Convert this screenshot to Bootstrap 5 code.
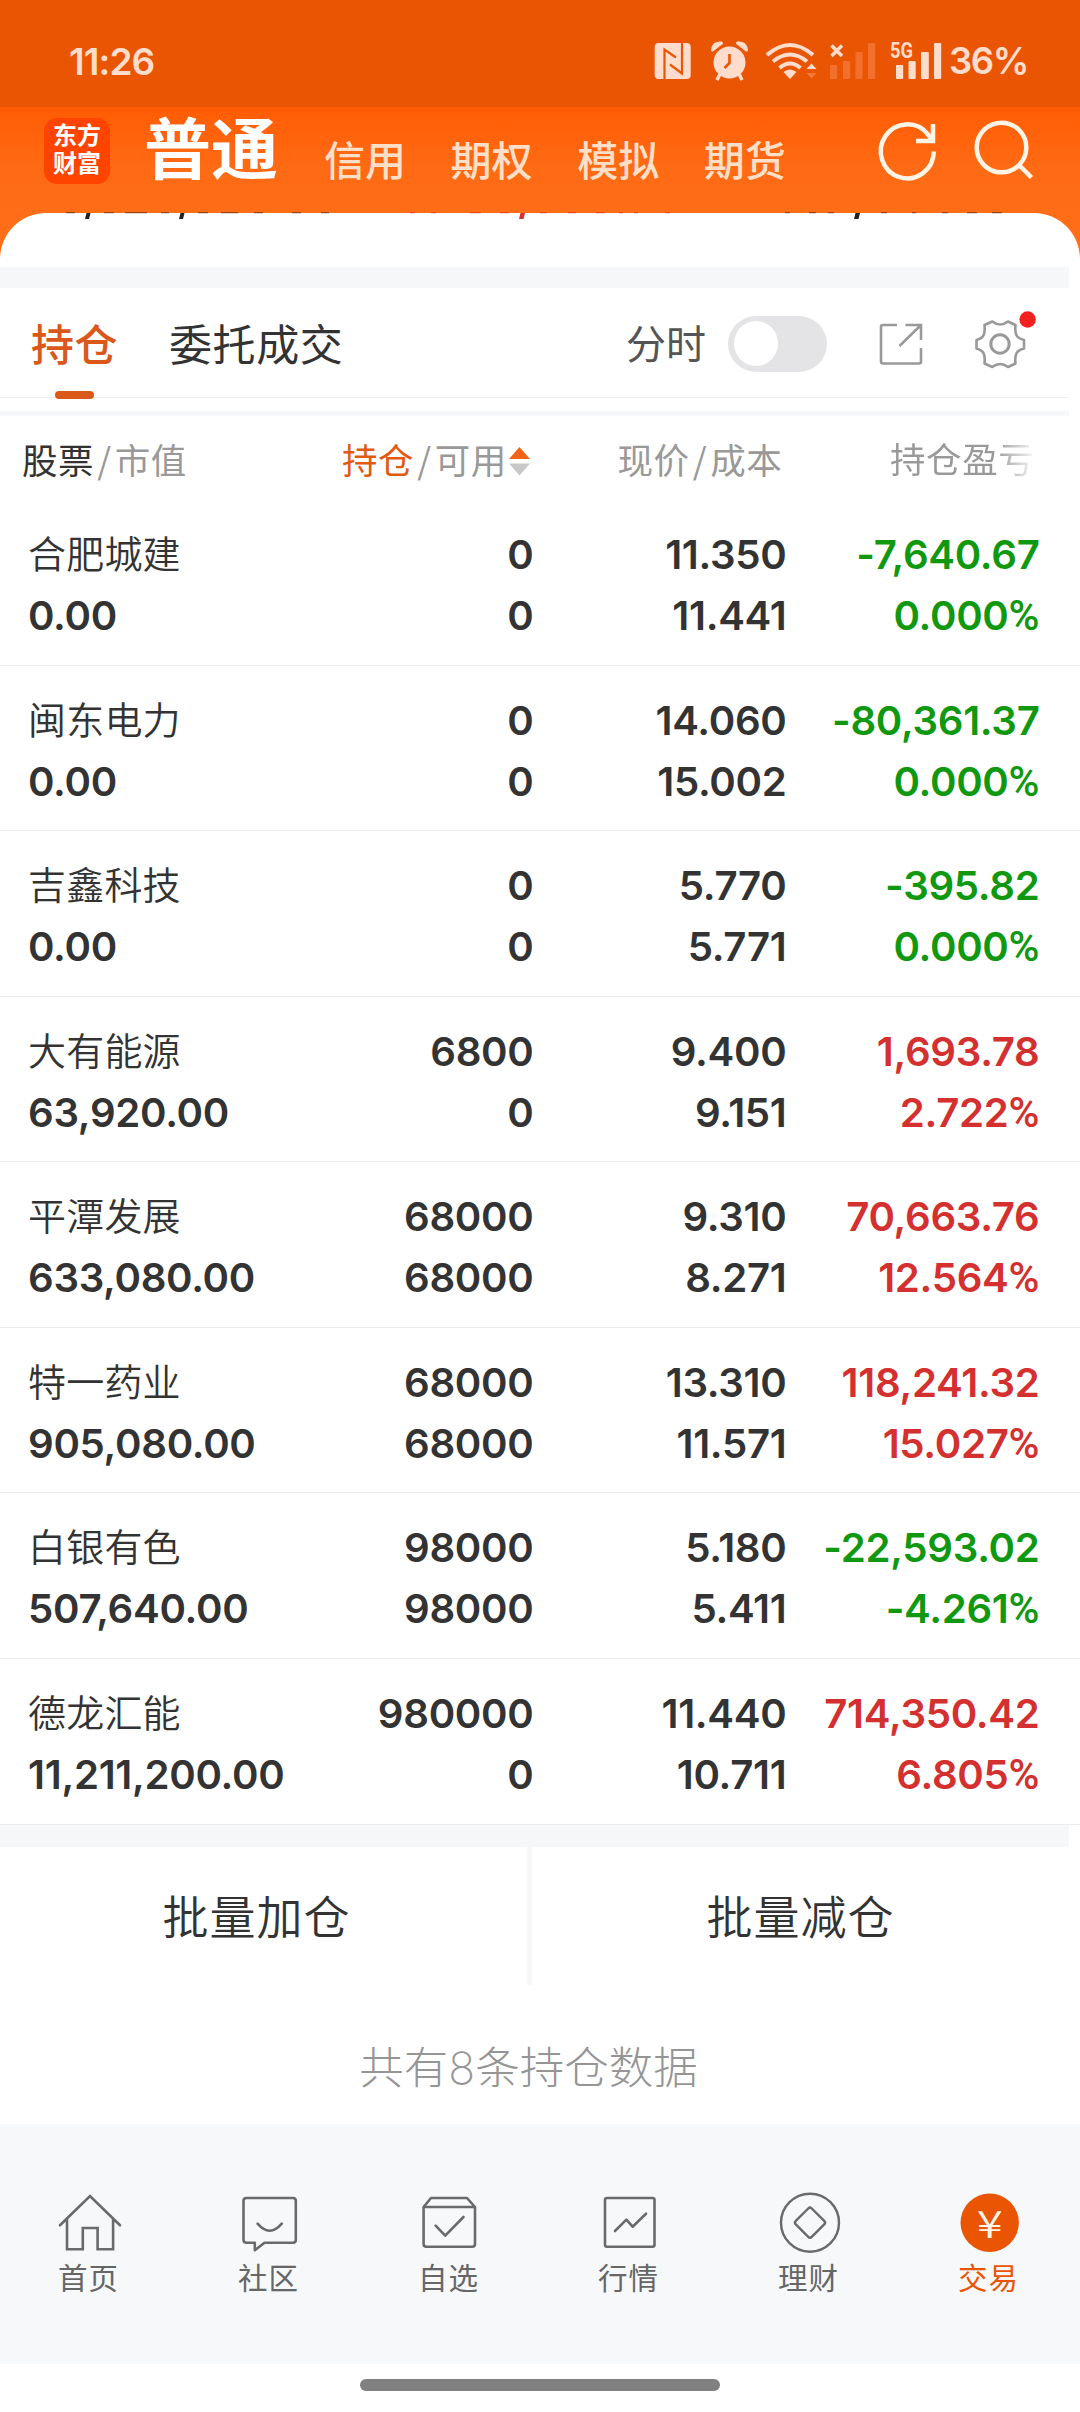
<!DOCTYPE html>
<html lang="zh-CN">
<head>
<meta charset="utf-8">
<meta name="viewport" content="width=device-width, initial-scale=1">
<title>持仓</title>
<link rel="stylesheet" href="https://cdn.jsdelivr.net/npm/bootstrap@5.3.0/dist/css/bootstrap.min.css">
<style>
  body { width: 1080px; height: 2412px; overflow: hidden; background: #fff; color: #333; font-family: Inter, "Noto Sans CJK SC", sans-serif; }
  svg { display: block; flex: none; }
  .statusbar { height: 107px; background: #ea5504; color: #ffdccb; padding: 16px 53px 0 69px; font-size: 37px; font-weight: 600; }
  .clock { letter-spacing: -.9px; }
  .battery { font-weight: 600; font-size: 36.5px; width: 78px; letter-spacing: -1.4px; margin-left: 7px; }
  .topbar { height: 155px; background: linear-gradient(#ff5c04 0, #ff6a14 60px, #ff7019 100%); }
  .brandrow { height: 106px; padding-left: 44px; }
  .applogo { width: 66px; height: 66px; margin-top: 10.5px; border-radius: 13px; background: #ff4400; color: #fff; font-family: "Noto Sans CJK SC", sans-serif; font-weight: 700; font-size: 24px; line-height: 28px; padding-top: 2px; }
  .acct-main { font-size: 67px; font-weight: 700; line-height: 80px; margin: 2.5px 0 0 34px; color: #fff; width: 180px; }
  .acct { font-size: 41px; font-weight: 500; line-height: 50px; width: 126.6px; margin-top: 28.5px; color: #ffdfc8; }
  .sheet { margin-top: -49px; border-radius: 46px 46px 0 0; background: #fff; height: 54px; }
  .sheet svg { overflow: visible; }
  .band { background: #f6f7f9; width: 1069px; }
  .tabs { height: 110px; width: 1069px; border-bottom: 1px solid #f0f0f1; font-size: 43px; line-height: 60px; padding: 27px 30px 0 31px; }
  .tab { letter-spacing: .6px; white-space: nowrap; }
  .tab-on { color: #d9581a; font-weight: 500; width: 88px; margin-right: 50px; }
  .tab-on::after { content: ""; display: block; width: 39px; height: 8px; border-radius: 4px; background: #d9581a; margin: 15.5px 0 0 24px; }
  .minute { font-size: 40px; color: #555; white-space: nowrap; }
  .switch { width: 99px; height: 56px; border-radius: 28px; background: #e4e4e6; padding: 5px 6px; margin: 1px 52px 0 22px; }
  .switch i { display: block; width: 44px; height: 45px; border-radius: 50%; background: #fff; }
  .tools { overflow: visible; margin-top: -1px; }
  .colhead { height: 84px; font-size: 35.5px; line-height: 50px; padding: 17.5px 0 0 22px; color: #999; letter-spacing: .6px; }
  .colhead b { font-weight: 400; color: #333; }
  .colhead .sortkey { color: #e05a14; }
  .colhead i { font-style: normal; display: inline-block; width: 20.5px; text-align: center; font-weight: 400; font-family: "Noto Sans CJK SC", sans-serif; }
  .fadeout { padding-top: 2px; background: linear-gradient(90deg, #999 105px, #fff 148px); -webkit-background-clip: text; background-clip: text; color: transparent; }
  .holding { height: 165.57px; border-bottom: 1px solid #ebebeb; padding: 24px 40.5px 0 28px; font-size: 40.2px; font-weight: 560; line-height: 61px; letter-spacing: -.3px; }
  .holding div { width: 253px; text-align: right; white-space: nowrap; }
  .holding div:first-child { width: 252.5px; text-align: left; }
  .holding span { display: block; }
  .holding em { font-family: Roboto, sans-serif; font-style: normal; font-weight: 500; font-size: 42px; line-height: 1; letter-spacing: 0; }
  .stockname { font-size: 38px; font-weight: 350; letter-spacing: .2px; }
  .gain { color: #d3302f; }
  .loss { color: #109810; }
  .batch { height: 138px; font-size: 46px; line-height: 140px; letter-spacing: 1px; width: 1069px; font-weight: 350; }
  .batch .split { width: 5px; background: #f6f7f9; }
  .summary { height: 139.4px; font-size: 44.5px; line-height: 166px; font-weight: 200; color: #959595; padding-right: 23px; }
  .tabbar { height: 240px; background: #f7f8fa; padding-top: 66px; font-size: 29.5px; line-height: 40px; letter-spacing: 1px; }
  .tabbar a { width: 180px; color: #666; text-decoration: none; }
  .tabbar a.current { color: #ea5504; }
  .tabbar span { margin: 2px 3px 0 0; }
  .homebar { width: 360px; height: 12px; border-radius: 6px; background: #808080; margin: 15px auto 0; }
</style>
<script src="https://cdn.jsdelivr.net/npm/bootstrap@5.3.0/dist/js/bootstrap.bundle.min.js"></script>
</head>
<body>
<header>
  <div class="statusbar d-flex align-items-center">
    <span class="clock me-auto">11:26</span>
    <svg width="292" height="46" viewBox="650 40 292 46" fill="#ffdccb">
      <rect x="654.7" y="44" width="36" height="36" rx="4"/>
      <path d="M664.500 80V50.500l11.500 8M682 44v30.500l-12-9" fill="none" stroke="#ea5504" stroke-width="2.2"/>
      <circle cx="729.5" cy="63.5" r="16"/>
      <path d="M712.500 51q1-8 9-7zM746.500 51q-1-8-9-7z" stroke="#ffdccb" stroke-width="3" stroke-linejoin="round"/>
      <path d="M720 75l-3 6M739 75l3 6" stroke="#ffdccb" stroke-width="3.5"/>
      <path d="M729.5 55v9l-5 5" fill="none" stroke="#ea5504" stroke-width="2.6"/>
      <g fill="none" stroke="#ffdccb" stroke-width="4"><path d="M767 56q23-20 46 0"/><path d="M773 62.5q17-14 34 0"/><path d="M779.5 69q10.500-9 21 0"/></g>
      <path d="M783.500 73q6.500-5 13 0l-6.500 7z"/>
      <path d="M806.500 70l5-5.500 5 5.500z"/><path d="M806.500 74h10l-5 5.500z" fill="#f37a3a"/>
      <path d="M831.5 46.500l10.500 10.500M842 46.500l-10.500 10.500" stroke="#ffdccb" stroke-width="3.5"/>
      <g fill="#f26f2d"><rect x="830" y="66" width="7.2" height="14" rx="1"/><rect x="843" y="62" width="7.2" height="18" rx="1"/><rect x="855.5" y="53" width="7.2" height="27" rx="1"/><rect x="868" y="44" width="7.2" height="36" rx="1"/></g>
      <rect x="896" y="66" width="7.2" height="14" rx="1"/><rect x="908.5" y="62" width="7.2" height="18" rx="1"/><rect x="921" y="53" width="7.8" height="27" rx="1"/><rect x="934" y="44" width="7.2" height="36" rx="1"/>
      <text x="890" y="59" font-size="21.500" font-weight="700" font-family="Roboto, sans-serif" textLength="23" lengthAdjust="spacingAndGlyphs">5G</text>
    </svg>
    <span class="battery">36%</span>
  </div>
  <div class="topbar">
    <nav class="brandrow d-flex align-items-start">
      <div class="applogo text-center">东方<br>财富</div>
      <span class="acct-main">普通</span>
      <span class="acct">信用</span><span class="acct">期权</span><span class="acct">模拟</span><span class="acct">期货</span>
      <svg class="ms-auto" width="208" height="80" viewBox="872 107 208 80" fill="none" stroke="#fff4e6" stroke-width="4.5">
        <path d="M933.8 151.500A26.500 27 0 1 1 928 134.500L933 141"/>
        <path d="M933 124v17h-17"/>
        <circle cx="1001.5" cy="147.500" r="24.800"/><path d="M1019 165l12.500 12.500"/>
      </svg>
    </nav>
  </div>
</header>
<main>
  <div class="sheet">
    <!-- lower edge of the totals line that has scrolled under the header -->
    <svg width="1080" height="7" viewBox="0 0 1080 7">
      <path d="M66-.3h9M104-.3h10M125-.3h22M161-.3h8M198-.3h10M221-.3h17M254-.3h9M292-.3h9M321-.3h8M785-.3h5M809-.3h7M828-.3h6M881-.3h6M912-.3h4M942-.3h6M967-.3h10M992-.3h10" stroke="#7a3a14" stroke-width="1"/>
      <path d="M410-.3h5M431-.3h5M470-.3h11M500-.3h9M540-.3h7M568-.3h8M596-.3h9M619-.3h4M634-.3h4M665-.3h5" stroke="#e0401a" stroke-width="1"/>
      <path d="M86.500 0h4l-1.500 6h-4zM180.500 0h4l-1.500 6h-4zM855.500 0h4.500l-1.500 6h-4.500z" fill="#222"/>
      <path d="M520.500 0h4.500l-1.500 6h-4.500z" fill="#d3302f"/>
    </svg>
  </div>
  <div class="band" style="height:21px"></div>
  <div class="tabs d-flex align-items-start">
    <span class="tab tab-on">持仓</span><span class="tab me-auto">委托成交</span>
    <span class="minute">分时</span>
    <span class="switch"><i></i></span>
    <svg class="tools" width="160" height="60" viewBox="879 314 160 60" fill="none" stroke="#999" stroke-width="2.6">
      <path d="M897 325h-14q-2 0-2 2v34.500q0 2 2 2h36q2 0 2-2V348M905.500 325H921v15M899.500 346L921 325"/>
      <circle cx="1000" cy="344" r="9.200" stroke-width="3"/>
      <path d="M992.300 321.500Q1000 327.500 1008 321.500L1015.500 325C1014.500 334.500 1016.500 338 1024 340V348.500C1016.500 350.500 1014.500 354 1015.500 363.500L1008 367Q1000 361 992.300 367L984.500 363.500C985.500 354 983.500 350.500 976.500 348.500V340C983.500 338 985.500 334.500 984.500 325z" stroke-linejoin="round"/>
      <circle cx="1027.6" cy="319.500" r="8.200" fill="#f5211e" stroke="none"/>
    </svg>
  </div>
  <div class="band" style="height:5px;margin-top:13px"></div>
  <div class="colhead d-flex">
    <div style="width:320px"><b>股票</b><i>/</i>市值</div>
    <div class="d-flex" style="width:275.5px"><span><b class="sortkey">持仓</b><i>/</i>可用</span>
      <svg style="margin:12.500px 0 0 2px" width="21" height="30" viewBox="0 0 21 30"><path d="M0 13L10.500 1 21 13z" fill="#f26318"/><path d="M0 17.500h21L10.500 29.500z" fill="#c8c8c8"/></svg></div>
    <div style="width:272.5px">现价<i>/</i>成本</div>
    <div class="fadeout">持仓盈亏</div>
  </div>
  <section>
    <div class="holding d-flex"><div><span class="stockname">合肥城建</span><span>0.00</span></div><div><span>0</span><span>0</span></div><div><span>11.350</span><span>11.441</span></div><div class="loss"><span>-7,640.67</span><span>0.000<em>%</em></span></div></div>
    <div class="holding d-flex"><div><span class="stockname">闽东电力</span><span>0.00</span></div><div><span>0</span><span>0</span></div><div><span>14.060</span><span>15.002</span></div><div class="loss"><span>-80,361.37</span><span>0.000<em>%</em></span></div></div>
    <div class="holding d-flex"><div><span class="stockname">吉鑫科技</span><span>0.00</span></div><div><span>0</span><span>0</span></div><div><span>5.770</span><span>5.771</span></div><div class="loss"><span>-395.82</span><span>0.000<em>%</em></span></div></div>
    <div class="holding d-flex"><div><span class="stockname">大有能源</span><span>63,920.00</span></div><div><span>6800</span><span>0</span></div><div><span>9.400</span><span>9.151</span></div><div class="gain"><span>1,693.78</span><span>2.722<em>%</em></span></div></div>
    <div class="holding d-flex"><div><span class="stockname">平潭发展</span><span>633,080.00</span></div><div><span>68000</span><span>68000</span></div><div><span>9.310</span><span>8.271</span></div><div class="gain"><span>70,663.76</span><span>12.564<em>%</em></span></div></div>
    <div class="holding d-flex"><div><span class="stockname">特一药业</span><span>905,080.00</span></div><div><span>68000</span><span>68000</span></div><div><span>13.310</span><span>11.571</span></div><div class="gain"><span>118,241.32</span><span>15.027<em>%</em></span></div></div>
    <div class="holding d-flex"><div><span class="stockname">白银有色</span><span>507,640.00</span></div><div><span>98000</span><span>98000</span></div><div><span>5.180</span><span>5.411</span></div><div class="loss"><span>-22,593.02</span><span>-4.261<em>%</em></span></div></div>
    <div class="holding d-flex"><div><span class="stockname">德龙汇能</span><span>11,211,200.00</span></div><div><span>980000</span><span>0</span></div><div><span>11.440</span><span>10.711</span></div><div class="gain"><span>714,350.42</span><span>6.805<em>%</em></span></div></div>
  </section>
  <div class="band" style="height:22px"></div>
  <div class="batch d-flex text-center">
    <span style="width:513px">批量加仓</span><span style="width:14px"></span><span class="split"></span><span class="flex-fill">批量减仓</span>
  </div>
  <div class="summary text-center">共有8条持仓数据</div>
</main>
<footer>
  <nav class="tabbar d-flex">
    <a class="d-flex flex-column align-items-center" href="#"><svg width="70" height="66" fill="none" stroke="#6a6a6a" stroke-width="2.6" stroke-linecap="round"><path d="M5 35.300L35 6l30 29.300M12 29v30.300h15.800V38h14.800v21.300h15.500V29"/></svg><span>首页</span></a>
    <a class="d-flex flex-column align-items-center" href="#"><svg width="70" height="66" fill="none" stroke="#6a6a6a" stroke-width="2.6" stroke-linecap="round" stroke-linejoin="round"><path d="M11.500 8H58q2.800 0 2.800 2.800V50q0 2.700-2.800 2.700H29.500l-9.700 7.600v-7.600h-8.300q-3 0-3-2.700V10.800Q8.500 8 11.500 8zM22.600 33.700q12 14 24.200 0"/></svg><span>社区</span></a>
    <a class="d-flex flex-column align-items-center" href="#"><svg width="70" height="66" fill="none" stroke="#6a6a6a" stroke-width="2.6" stroke-linecap="round" stroke-linejoin="round"><path d="M8.600 17L16 8h36l8 9v37q0 2.700-2.700 2.700H11.300q-2.700 0-2.700-2.700zH60M20.600 35.700l9.600 10L48.500 27"/></svg><span>自选</span></a>
    <a class="d-flex flex-column align-items-center" href="#"><svg width="70" height="66" fill="none" stroke="#6a6a6a" stroke-width="2.6" stroke-linecap="round" stroke-linejoin="round"><rect x="10" y="8" width="49.500" height="48.700" rx="2"/><path d="M20 41l11.400-11.300 6.200 7L51 23.700"/></svg><span>行情</span></a>
    <a class="d-flex flex-column align-items-center" href="#"><svg width="70" height="66" fill="none" stroke="#6a6a6a" stroke-width="2.4"><circle cx="35" cy="32.700" r="29"/><rect x="23.700" y="21.400" width="22.600" height="22.600" rx="2.500" transform="rotate(45 35 32.700)"/></svg><span>理财</span></a>
    <a class="current d-flex flex-column align-items-center" href="#"><svg width="70" height="66"><circle cx="34.700" cy="32.700" r="29.200" fill="#ea5504"/><text x="21.700" y="47.500" font-size="38" font-weight="350" font-family="Noto Sans CJK SC" fill="#fff4ea" letter-spacing="0" textLength="26" lengthAdjust="spacingAndGlyphs">¥</text></svg><span>交易</span></a>
  </nav>
  <div class="homebar"></div>
</footer>
</body>
</html>
